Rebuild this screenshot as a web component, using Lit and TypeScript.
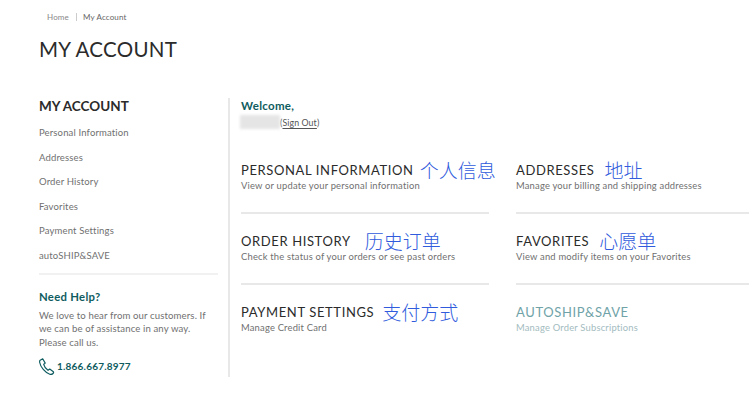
import { LitElement, html, css } from "lit";
import { customElement } from "lit/decorators.js";

const nav = ["Personal Information", "Addresses", "Order History", "Favorites", "Payment Settings", "autoSHIP&SAVE"];
const cards = [
  { t: "PERSONAL INFORMATION", d: "View or update your personal information", n: "个人信息", g: 6 },
  { t: "ADDRESSES", d: "Manage your billing and shipping addresses", n: "地址", g: 10 },
  { t: "ORDER HISTORY", d: "Check the status of your orders or see past orders", n: "历史订单", g: 14 },
  { t: "FAVORITES", d: "View and modify items on your Favorites", n: "心愿单", g: 10 },
  { t: "PAYMENT SETTINGS", d: "Manage Credit Card", n: "支付方式", g: 8 },
  { t: "AUTOSHIP&SAVE", d: "Manage Order Subscriptions", n: "", g: 0, muted: true },
];

@customElement("app-root")
export class AppRoot extends LitElement {
  static styles = css`
    :host { display: block; width: 749px; height: 400px; overflow: hidden; background: #fff; font-family: Lato, "Noto Sans", sans-serif; color: #555; box-sizing: border-box; padding: 12px 0 0 39px; }
    .crumbs { display: flex; align-items: center; padding-left: 8px; font-size: 8px; line-height: 10px; height: 10px; color: #888; letter-spacing: .15px; }
    .crumbs i { width: 1px; height: 8px; background: #ccc; margin: 0 6px 0 7px; }
    .crumbs span:last-child { color: #666; }
    h1 { margin: 14px 0 0; font-size: 20.5px; line-height: 26px; font-weight: 400; color: #2b2b2b; letter-spacing: .3px; }
    .main { display: flex; margin-top: 36px; height: 279px; }
    .side { width: 179px; flex: none; }
    h2 { margin: 0; font-size: 13.5px; line-height: 16px; font-weight: 700; color: #2b2b2b; letter-spacing: 0; }
    .nav { list-style: none; margin: 7px 0 0; padding: 0 0 4.5px; border-bottom: 2px solid #f1f1f1; }
    .nav li { font-size: 9.5px; line-height: 24.6px; letter-spacing: .15px; color: #707070; }
    h3 { margin: 15px 0 0; font-size: 11.3px; line-height: 14px; font-weight: 700; color: #0f5c60; letter-spacing: .3px; }
    .help { margin: 5px 0 0; font-size: 9.6px; line-height: 13.3px; letter-spacing: .12px; color: #707070; }
    .phone { display: flex; align-items: center; gap: 2px; margin-top: 9px; font-size: 10px; line-height: 17px; font-weight: 700; color: #0f5c60; letter-spacing: .2px; }
    .phone svg { display: block; width: 16px; height: 17px; }
    .body { margin-left: 10px; border-left: 2px solid #e8e8e8; padding-left: 11px; flex: 1; min-width: 0; }
    .welcome { font-size: 11.5px; line-height: 16px; font-weight: 700; color: #0f5c60; letter-spacing: .3px; }
    .user { display: flex; align-items: center; height: 14px; margin-top: 1px; font-size: 8.8px; color: #555; letter-spacing: .1px; }
    .blur { width: 40px; height: 14px; margin-left: -1px; background: #e5e5e5; filter: blur(1.5px); }
    .user u { text-underline-offset: 2px; }
    .grid { display: grid; grid-template-columns: 248px 233px; column-gap: 27px; margin-top: 14px; }
    .card { height: 71px; box-sizing: border-box; padding-top: 19px; }
    .card.line { border-bottom: 2px solid #e8e8e8; }
    .head { display: flex; align-items: center; height: 16px; font-size: 13px; color: #2b2b2b; letter-spacing: .62px; white-space: nowrap; }
    .note { font-family: "Noto Sans CJK SC", sans-serif; font-size: 19px; font-weight: 300; color: #2f5bdc; letter-spacing: 0; line-height: 16px; }
    .desc { margin-top: 2px; font-size: 9.4px; line-height: 12px; letter-spacing: .2px; color: #707070; white-space: nowrap; }
    .muted .head { color: #6fa3a8; }
    .muted .desc { color: #a3bcc0; }
  `;

  render() {
    return html`
      <div class="crumbs"><span>Home</span><i></i><span>My Account</span></div>
      <h1>MY ACCOUNT</h1>
      <div class="main">
        <aside class="side">
          <h2>MY ACCOUNT</h2>
          <ul class="nav">${nav.map((n) => html`<li>${n}</li>`)}</ul>
          <h3>Need Help?</h3>
          <p class="help">We love to hear from our customers. If we can be of assistance in any way. Please call us.</p>
          <div class="phone">
            <svg viewBox="0 0 16 17" fill="none" stroke="#0f5c60" stroke-width="1.2" stroke-linejoin="round">
              <path d="M.8 2.600 3.700.8l2.500 4.300-1.500 1.200c.6 2.300 2.300 4.700 4.300 6l1.700-1.200 3.700 2.700c.3.500.1 1.200-.4 1.700-.8.800-2 1.200-3.200.800C6 14.700 1.500 9 .7 4.500.6 3.700.6 3.100.8 2.600Z"/>
            </svg>
            <span>1.866.667.8977</span>
          </div>
        </aside>
        <section class="body">
          <div class="welcome">Welcome,</div>
          <div class="user"><span class="blur"></span><span>(<u>Sign Out</u>)</span></div>
          <div class="grid">
            ${cards.map((c, i) => html`
              <div class="card ${i < 4 ? "line" : ""} ${c.muted ? "muted" : ""}">
                <div class="head"><span>${c.t}</span>${c.n ? html`<span class="note" style="margin-left:${c.g}px">${c.n}</span>` : ""}</div>
                <div class="desc">${c.d}</div>
              </div>`)}
          </div>
        </section>
      </div>
    `;
  }
}
